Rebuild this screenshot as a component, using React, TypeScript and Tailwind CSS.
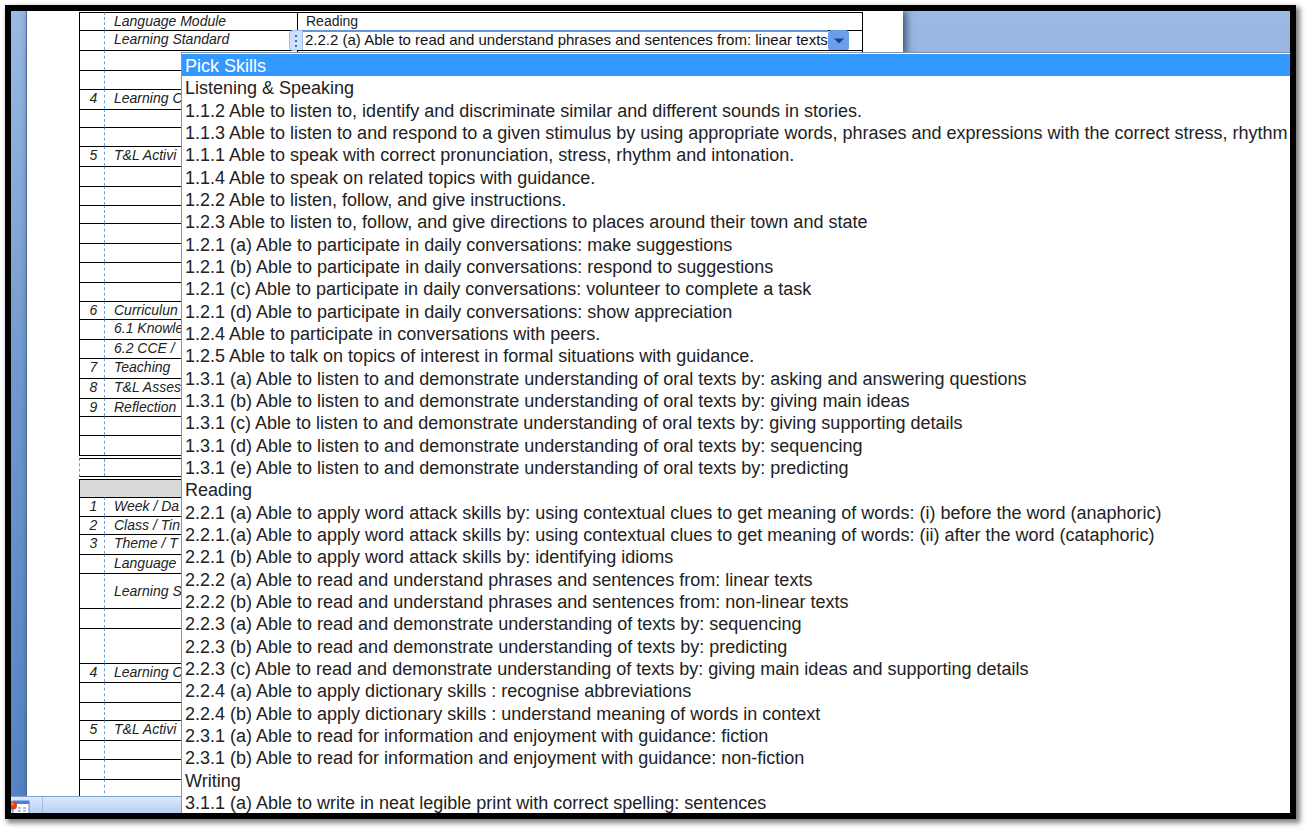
import React from "react";

const skills = [
  "Pick Skills",
  "Listening & Speaking",
  "1.1.2 Able to listen to, identify and discriminate similar and different sounds in stories.",
  "1.1.3 Able to listen to and respond to a given stimulus by using appropriate words, phrases and expressions with the correct stress, rhythm",
  "1.1.1 Able to speak with correct pronunciation, stress, rhythm and intonation.",
  "1.1.4 Able to speak on related topics with guidance.",
  "1.2.2 Able to listen, follow, and give instructions.",
  "1.2.3 Able to listen to, follow, and give directions to places around their town and state",
  "1.2.1 (a) Able to participate in daily conversations: make suggestions",
  "1.2.1 (b) Able to participate in daily conversations: respond to suggestions",
  "1.2.1 (c) Able to participate in daily conversations: volunteer to complete a task",
  "1.2.1 (d) Able to participate in daily conversations: show appreciation",
  "1.2.4 Able to participate in conversations with peers.",
  "1.2.5 Able to talk on topics of interest in formal situations with guidance.",
  "1.3.1 (a) Able to listen to and demonstrate understanding of oral texts by: asking and answering questions",
  "1.3.1 (b) Able to listen to and demonstrate understanding of oral texts by: giving main ideas",
  "1.3.1 (c) Able to listen to and demonstrate understanding of oral texts by: giving supporting details",
  "1.3.1 (d) Able to listen to and demonstrate understanding of oral texts by: sequencing",
  "1.3.1 (e) Able to listen to and demonstrate understanding of oral texts by: predicting",
  "Reading",
  "2.2.1 (a) Able to apply word attack skills by: using contextual clues to get meaning of words: (i) before the word (anaphoric)",
  "2.2.1.(a) Able to apply word attack skills by: using contextual clues to get meaning of words: (ii) after the word (cataphoric)",
  "2.2.1 (b) Able to apply word attack skills by: identifying idioms",
  "2.2.2 (a) Able to read and understand phrases and sentences from: linear texts",
  "2.2.2 (b) Able to read and understand phrases and sentences from: non-linear texts",
  "2.2.3 (a) Able to read and demonstrate understanding of texts by: sequencing",
  "2.2.3 (b) Able to read and demonstrate understanding of texts by: predicting",
  "2.2.3 (c) Able to read and demonstrate understanding of texts by: giving main ideas and supporting details",
  "2.2.4 (a) Able to apply dictionary skills : recognise abbreviations",
  "2.2.4 (b) Able to apply dictionary skills : understand meaning of words in context",
  "2.3.1 (a) Able to read for information and enjoyment with guidance: fiction",
  "2.3.1 (b) Able to read for information and enjoyment with guidance: non-fiction",
  "Writing",
  "3.1.1 (a) Able to write in neat legible print with correct spelling: sentences",
];

type Row = { no?: string; label?: string; size: "s" | "m" | "l" | "xl"; value?: React.ReactNode };

const heights = {
  s: "h-[18px] align-top",
  m: "h-[19px] align-top",
  l: "h-[20px] align-top",
  xl: "h-[35px] align-middle",
};

function SkillField() {
  return (
    <div className="absolute -top-px -left-[9px] flex h-[21px] w-[560px] items-stretch">
      <span className="flex w-[14px] flex-col items-center justify-center gap-[3px] rounded-l-sm border border-[#9dbdf0] bg-[#cfe0fa]">
        <i className="size-[2px] bg-[#3c6fc4]" />
        <i className="size-[2px] bg-[#3c6fc4]" />
        <i className="size-[2px] bg-[#3c6fc4]" />
      </span>
      <select
        aria-label="Learning Standard"
        defaultValue={skills[23]}
        className="min-w-0 flex-1 appearance-none border-t-2 border-b border-t-[#5f97e6] border-b-[#222] bg-white pb-[2px] pl-[2px] text-[15px] leading-[16px] text-[#111] outline-none"
      >
        {skills.map((s) => (
          <option key={s}>{s}</option>
        ))}
      </select>
      <span className="flex w-[21px] items-center justify-center rounded-sm bg-[#6a9eea]">
        <svg width="10" height="6" viewBox="0 0 10 6" aria-hidden="true">
          <path d="M0 0.5H10L5 5.5Z" fill="#123f92" />
        </svg>
      </span>
    </div>
  );
}

const firstLesson: Row[] = [
  { label: "Language Module", size: "s", value: "Reading" },
  { label: "Learning Standard", size: "l", value: <SkillField /> },
  { size: "l" },
  { size: "m" },
  { no: "4", label: "Learning C", size: "l" },
  { size: "s" },
  { size: "m" },
  { no: "5", label: "T&L Activi", size: "l" },
  { size: "l" },
  { size: "m" },
  { size: "s" },
  { size: "l" },
  { size: "m" },
  { size: "l" },
  { size: "m" },
  { no: "6", label: "Curriculun", size: "s" },
  { label: "6.1 Knowle", size: "l" },
  { label: "6.2 CCE /", size: "m" },
  { no: "7", label: "Teaching", size: "l" },
  { no: "8", label: "T&L Asses", size: "l" },
  { no: "9", label: "Reflection", size: "s" },
  { size: "m" },
  { size: "l" },
];

const secondLesson: Row[] = [
  { no: "1", label: "Week / Da", size: "m" },
  { no: "2", label: "Class / Tin", size: "s" },
  { no: "3", label: "Theme / T", size: "l" },
  { label: "Language", size: "m" },
  { label: "Learning S", size: "xl" },
  { size: "l" },
  { size: "xl" },
  { no: "4", label: "Learning C", size: "m" },
  { size: "l" },
  { size: "s" },
  { no: "5", label: "T&L Activi", size: "l" },
  { size: "m" },
  { size: "l" },
  { size: "l" },
];

function LessonTable({ rows, heading }: { rows: Row[]; heading?: boolean }) {
  return (
    <table className="w-full table-fixed border-separate border-spacing-0 border-x border-b border-black text-[14px] leading-[16px] text-[#222]">
      <colgroup>
        <col className="w-[25px]" />
        <col className="w-[192px]" />
        <col />
      </colgroup>
      <tbody>
        {heading && (
          <tr className="h-[18px]">
            <td colSpan={3} className="border-t border-black bg-[#d9d9d9] p-0" />
          </tr>
        )}
        {rows.map((r, i) => (
          <tr key={i} className={heights[r.size]}>
            <td className="border-t border-r border-t-black border-r-[#6f9fd8] p-0 pl-[3px] text-center italic [border-right-style:dashed]">
              {r.no}
            </td>
            <td className="overflow-hidden border-t border-black p-0 pl-[9px] whitespace-nowrap italic">{r.label}</td>
            <td className="relative border-t border-l border-black p-0 pl-[8px] whitespace-nowrap">{r.value}</td>
          </tr>
        ))}
      </tbody>
    </table>
  );
}

function StatusBar() {
  return (
    <footer className="flex h-[17px] shrink-0 items-stretch overflow-hidden border-t border-[#7f9fce] bg-linear-to-b from-[#dfebfb] via-[#c8dcf6] to-[#b9d2f3]">
      <button aria-label="Record macro" className="flex w-[32px] items-start border-r border-[#9dbbe6] pt-[3px]">
        <svg width="19" height="13" viewBox="0 0 19 13" aria-hidden="true">
          <rect x="2" y="1" width="16" height="14" fill="#fff" stroke="#5d82c8" />
          <rect x="2" y="1" width="16" height="3" fill="#4d7de0" />
          <path d="M7 8h3M12 8h3M7 11h3M12 11h3" stroke="#9daccb" strokeWidth="1.5" />
          <circle cx="2" cy="5.500" r="4" fill="#d9431f" />
          <circle cx="1.500" cy="4" r="1.500" fill="#f08a68" />
        </svg>
      </button>
    </footer>
  );
}

export default function App() {
  return (
    <div className="h-screen bg-white pt-[5px] pr-[13px] pb-[13px] pl-[5px] font-['Liberation_Sans',Arial,sans-serif]">
      <main className="relative flex h-full flex-col overflow-hidden border-[6px] border-black shadow-[3px_3px_5px_1px_rgba(0,0,0,0.5)]">
        <div className="min-h-0 flex-1 overflow-hidden bg-linear-to-b from-[#9bbae3] from-0% via-[#6f97cd] via-50% to-[#5583c3] pl-[15px]">
          <section className="h-full w-[877px] border-l border-[#4a6a98] bg-white pt-px pr-[40px] pl-[52px] shadow-[3px_0_8px_rgba(30,50,80,0.8)]">
            <LessonTable rows={firstLesson} />
            <div className="my-[2px] flex h-[19px] border-y border-l border-y-black border-l-[#6f9fd8] [border-left-style:dashed]">
              <div className="w-[25px] border-r border-dashed border-[#6f9fd8]" />
            </div>
            <LessonTable rows={secondLesson} heading />
          </section>
        </div>
        <StatusBar />
        <div
          role="listbox"
          aria-label="Skills"
          className="absolute top-[41px] right-0 bottom-0 left-[170px] flex flex-col overflow-hidden border-t border-l border-[#8a93a8] bg-white pt-px"
        >
          {skills.map((s, i) => (
            <button
              key={s}
              role="option"
              aria-selected={i === 0}
              className="flex min-h-0 flex-1 items-center pt-[2px] pl-[3px] text-left text-[18px] leading-[20px] whitespace-nowrap text-[#222] aria-selected:bg-[#3399ff] aria-selected:text-white"
            >
              {s}
            </button>
          ))}
        </div>
      </main>
    </div>
  );
}
